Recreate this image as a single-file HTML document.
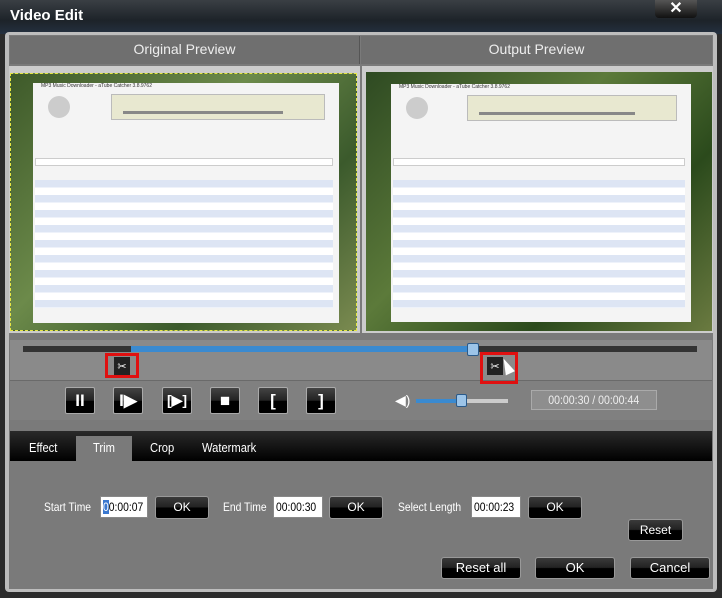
<!DOCTYPE html>
<html><head><meta charset="utf-8"><style>
*{margin:0;padding:0;box-sizing:border-box}
body{width:722px;height:598px;background:#2c2c2c;font-family:"Liberation Sans",sans-serif;position:relative;overflow:hidden}
.a{position:absolute}
.n{transform:scaleX(.86);transform-origin:left top;white-space:nowrap}
.title{left:0;top:0;width:722px;height:34px;background:linear-gradient(#3a3f44,#1d2329 60%,#243040)}
.frame{left:5px;top:32px;width:712px;height:560px;background:#bdbdbd;border-radius:4px}
.inner{left:9px;top:35px;width:704px;height:518px;background:#7a7a7a}
.hdr{top:36px;height:28px;background:#6f6f6f;color:#eee;font-size:14px;text-align:center;line-height:27px}
.btn{background:linear-gradient(#3a3a3a 0,#222 48%,#000 52%,#000);border:1px solid #999;border-radius:3px;color:#fff;font-size:12px;text-align:center}
.cb{width:30px;height:27px;background:linear-gradient(#444 0,#222 50%,#000 52%,#000);border:1px solid #aaa;border-radius:2px;color:#fff;font-weight:bold;text-align:center;line-height:25px;font-size:17px}
.lbl{color:#fff;font-size:12px}
.inp{background:#fff;border:1px solid #888;height:22px;font-size:12px;line-height:20px;padding-left:2px;color:#000;overflow:hidden}
.scr{background:#f4f4f4;overflow:hidden}
.rows{background:repeating-linear-gradient(#dde5f4 0 7.5px,#fff 7.5px 15px)}
</style></head><body>
<div class="a title"></div>
<div class="a" style="left:10px;top:7px;color:#fff;font-weight:bold;font-size:15px">Video Edit</div>
<div class="a" style="left:655px;top:0;width:42px;height:18px;background:linear-gradient(#555,#111);border-radius:0 0 4px 4px;color:#fff;font-weight:bold;text-align:center;font-size:16px;line-height:17px">✕</div>
<div class="a frame"></div>
<div class="a inner"></div>
<div class="a hdr" style="left:10px;width:350px;border-right:1px solid #555">Original Preview</div>
<div class="a hdr" style="left:361px;width:351px">Output Preview</div>

<div class="a" style="left:9px;top:66px;width:351px;height:267px;background:#ccc"></div>
<div class="a" style="left:10px;top:73px;width:347px;height:258px;background:linear-gradient(135deg,#3e5a2a,#6c8a4a 40%,#3b5a2c 70%,#7a8a50);border:1px dashed #e6e642"></div>
<div class="a scr" style="left:33px;top:83px;width:306px;height:240px">
 <div class="a" style="left:0;top:0;width:306px;height:8px;font-size:5px;color:#333;padding-left:8px">MP3 Music Downloader - aTube Catcher 3.8.9762</div>
 <div class="a" style="left:15px;top:13px;width:22px;height:22px;border-radius:50%;background:#ccc"></div>
 <div class="a" style="left:78px;top:11px;width:214px;height:26px;background:#e8e8d0;border:1px solid #bbb"></div>
 <div class="a" style="left:90px;top:28px;width:160px;height:3px;background:#888"></div>
 <div class="a" style="left:2px;top:75px;width:298px;height:8px;background:#fff;border:1px solid #ccc"></div>
 <div class="a rows" style="left:2px;top:97px;width:298px;height:128px"></div>
</div>
<div class="a" style="left:362px;top:66px;width:351px;height:267px;background:#ccc"></div>
<div class="a" style="left:366px;top:72px;width:346px;height:259px;background:linear-gradient(135deg,#2e4a22,#5c7a3a 40%,#2b4a1c 70%,#6a7a40)"></div>
<div class="a scr" style="left:391px;top:84px;width:300px;height:238px">
 <div class="a" style="left:0;top:0;width:300px;height:8px;font-size:5px;color:#333;padding-left:8px">MP3 Music Downloader - aTube Catcher 3.8.9762</div>
 <div class="a" style="left:15px;top:13px;width:22px;height:22px;border-radius:50%;background:#ccc"></div>
 <div class="a" style="left:76px;top:11px;width:210px;height:26px;background:#e8e8d0;border:1px solid #bbb"></div>
 <div class="a" style="left:88px;top:28px;width:156px;height:3px;background:#888"></div>
 <div class="a" style="left:2px;top:74px;width:292px;height:8px;background:#fff;border:1px solid #ccc"></div>
 <div class="a rows" style="left:2px;top:96px;width:292px;height:128px"></div>
</div>

<div class="a" style="left:10px;top:340px;width:702px;height:80px;background:#8a8a8a"></div>
<div class="a" style="left:10px;top:380px;width:702px;height:40px;background:#808080;border-top:1px solid #6a6a6a"></div>
<div class="a" style="left:23px;top:346px;width:674px;height:6px;background:#333"></div>
<div class="a" style="left:131px;top:346px;width:345px;height:6px;background:#3a8ad0"></div>
<div class="a" style="left:467px;top:343px;width:12px;height:13px;background:#9cc4e8;border:1px solid #2a5a8a;border-radius:2px"></div>
<div class="a" style="left:105px;top:353px;width:34px;height:25px;border:3px solid #e01010"></div>
<div class="a" style="left:114px;top:357px;width:16px;height:18px;background:#222;color:#fff;font-size:11px;text-align:center;line-height:20px">✂</div>
<div class="a" style="left:480px;top:352px;width:38px;height:32px;border:3px solid #e01010"></div>
<div class="a" style="left:487px;top:357px;width:16px;height:18px;background:#222;color:#fff;font-size:11px;text-align:center;line-height:20px">✂</div>
<div class="a" style="left:502px;top:358px;width:0;height:0;border-left:5px solid transparent;border-right:5px solid transparent;border-bottom:16px solid #fff;transform:rotate(-25deg)"></div>

<div class="a cb" style="left:65px;top:387px">II</div>
<div class="a cb" style="left:113px;top:387px">I▶</div>
<div class="a cb" style="left:162px;top:387px;font-size:14px">[▶]</div>
<div class="a cb" style="left:210px;top:387px">■</div>
<div class="a cb" style="left:258px;top:387px">[</div>
<div class="a cb" style="left:306px;top:387px">]</div>
<div class="a" style="left:395px;top:392px;color:#fff;font-size:14px">◀)</div>
<div class="a" style="left:416px;top:399px;width:92px;height:4px;background:#ccc"></div>
<div class="a" style="left:416px;top:399px;width:46px;height:4px;background:#3a8ad0"></div>
<div class="a" style="left:456px;top:394px;width:11px;height:13px;background:#9cc4e8;border:1px solid #2a5a8a;border-radius:2px"></div>
<div class="a" style="left:531px;top:390px;width:126px;height:20px;background:#8e8e8e;border:1px solid #aaa;color:#eee;font-size:12px;text-align:center;line-height:18px"><span style="display:inline-block;transform:scaleX(.88)">00:00:30 / 00:00:44</span></div>

<div class="a" style="left:10px;top:431px;width:702px;height:30px;background:linear-gradient(#2a2a2a,#000)"></div>
<div class="a" style="left:76px;top:436px;width:56px;height:25px;background:#7a7a7a"></div>
<div class="a lbl n" style="left:29px;top:440px;font-size:13px">Effect</div>
<div class="a lbl n" style="left:93px;top:440px;font-size:13px">Trim</div>
<div class="a lbl n" style="left:150px;top:440px;font-size:13px">Crop</div>
<div class="a lbl n" style="left:202px;top:440px;font-size:13px">Watermark</div>
<div class="a" style="left:10px;top:461px;width:702px;height:89px;background:#7a7a7a"></div>

<div class="a lbl n" style="left:44px;top:500px">Start Time</div>
<div class="a inp" style="left:100px;top:496px;width:48px"><div class="n"><span style="background:#3a78d0;color:#fff">0</span>0:00:07</div></div>
<div class="a btn" style="left:155px;top:496px;width:54px;height:23px;line-height:21px">OK</div>
<div class="a lbl n" style="left:223px;top:500px">End Time</div>
<div class="a inp" style="left:273px;top:496px;width:50px"><div class="n">00:00:30</div></div>
<div class="a btn" style="left:329px;top:496px;width:54px;height:23px;line-height:21px">OK</div>
<div class="a lbl n" style="left:398px;top:500px">Select Length</div>
<div class="a inp" style="left:471px;top:496px;width:50px"><div class="n">00:00:23</div></div>
<div class="a btn" style="left:528px;top:496px;width:54px;height:23px;line-height:21px">OK</div>
<div class="a btn" style="left:628px;top:519px;width:55px;height:22px;line-height:20px">Reset</div>

<div class="a" style="left:9px;top:553px;width:704px;height:36px;background:#7a7a7a"></div>
<div class="a btn" style="left:441px;top:557px;width:80px;height:22px;line-height:20px;font-size:13px">Reset all</div>
<div class="a btn" style="left:535px;top:557px;width:80px;height:22px;line-height:20px;font-size:13px">OK</div>
<div class="a btn" style="left:630px;top:557px;width:80px;height:22px;line-height:20px;font-size:13px">Cancel</div>
</body></html>
